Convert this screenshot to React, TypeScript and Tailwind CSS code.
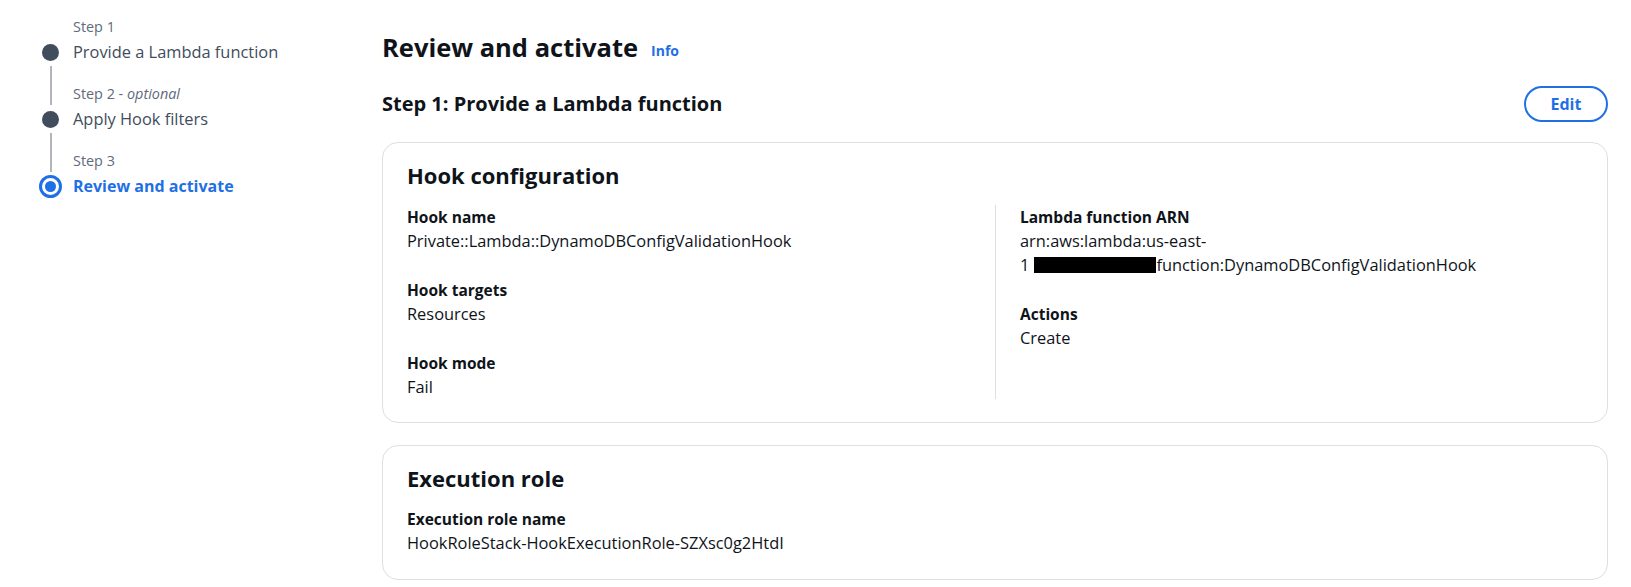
import { ReactNode } from 'react';

type Step = {
  label: string;
  optional?: boolean;
  title: string;
  active?: boolean;
};

const steps: Step[] = [
  { label: 'Step 1', title: 'Provide a Lambda function' },
  { label: 'Step 2', optional: true, title: 'Apply Hook filters' },
  { label: 'Step 3', title: 'Review and activate', active: true },
];

function Field({ label, children }: { label: string; children: ReactNode }) {
  return (
    <div>
      <div className="text-[15.5px] font-bold leading-[24px] text-[#0f141a]">{label}</div>
      <div className="text-[16.4px] leading-[24px] text-[#0f141a]">{children}</div>
    </div>
  );
}

function Sidebar() {
  return (
    <nav className="w-[382px] shrink-0 pl-[42px] pt-[17px]">
      {steps.map((s, i) => (
        <div key={s.label}>
          <div className={i === 0 ? 'flex' : 'flex h-[45px]'}>
            <div className="flex w-[17px] shrink-0 justify-center">
              {i > 0 && <div className="my-[3px] w-[2px] bg-[#b4b4bb]" />}
            </div>
            <div
              className={
                i === 0
                  ? 'pl-[14px] text-[14.4px] leading-[20px] text-[#5f6b7a]'
                  : 'self-end pb-[4px] pl-[14px] text-[14.4px] leading-[20px] text-[#5f6b7a]'
              }
            >
              {s.label}
              {s.optional && (
                <>
                  {' - '}
                  <i>optional</i>
                </>
              )}
            </div>
          </div>
          <div className={i === 0 ? 'mt-[4px] flex h-[22px] items-center' : 'flex h-[22px] items-center'}>
            <div className="flex w-[17px] shrink-0 justify-center">
              {s.active ? (
                <div className="flex h-[23px] w-[23px] shrink-0 items-center justify-center rounded-full border-[3px] border-[#1f6fe5]">
                  <div className="h-[11px] w-[11px] rounded-full bg-[#1f6fe5]" />
                </div>
              ) : (
                <div className="h-[17px] w-[17px] rounded-full bg-[#414d5c]" />
              )}
            </div>
            <div
              className={
                s.active
                  ? 'pl-[14px] text-[16px] font-bold leading-[22px] text-[#1f6fe5]'
                  : 'pl-[14px] text-[16.4px] leading-[22px] text-[#414d5c]'
              }
            >
              {s.title}
            </div>
          </div>
        </div>
      ))}
    </nav>
  );
}

export default function App() {
  return (
    <div className="flex h-[587px] w-[1631px] bg-white font-['Open_Sans',sans-serif] text-[#0f141a]">
      <Sidebar />
      <main className="w-[1226px] pt-[29px]">
        <div className="flex items-end gap-[13px]">
          <h1 className="text-[25.5px] font-bold leading-[36px]">Review and activate</h1>
          <a className="pb-[5px] text-[14px] font-bold leading-[18px] text-[#1f6fe5]">Info</a>
        </div>
        <div className="mt-[21px] flex h-[36px] items-center justify-between">
          <h2 className="text-[20px] font-bold leading-[28px]">Step 1: Provide a Lambda function</h2>
          <button
            type="button"
            className="h-[36px] w-[84px] rounded-full border-2 border-[#1f6fe5] text-[16px] font-bold text-[#1f6fe5]"
          >
            Edit
          </button>
        </div>

        <section className="mt-[20px] rounded-[16px] border border-[#dedee3] px-[24px] pb-[23px] pt-[16px]">
          <h3 className="text-[22px] font-bold leading-[32px]">Hook configuration</h3>
          <div className="mt-[14px] grid grid-cols-2">
            <div className="flex flex-col gap-[25px] pr-[24px]">
              <Field label="Hook name">Private::Lambda::DynamoDBConfigValidationHook</Field>
              <Field label="Hook targets">Resources</Field>
              <Field label="Hook mode">Fail</Field>
            </div>
            <div className="flex flex-col gap-[25px] border-l border-[#dedee3] pl-[24px]">
              <Field label="Lambda function ARN">
                arn:aws:lambda:us-east-
                <br />
                <span className="whitespace-nowrap">
                  1<span className="ml-[5px] inline-block h-[16px] w-[122px] translate-y-[2px] bg-black" />
                  function:DynamoDBConfigValidationHook
                </span>
              </Field>
              <Field label="Actions">Create</Field>
            </div>
          </div>
        </section>

        <section className="mt-[22px] rounded-[16px] border border-[#dedee3] px-[24px] pb-[24px] pt-[16px]">
          <h3 className="text-[22px] font-bold leading-[32px]">Execution role</h3>
          <div className="mt-[13px]">
            <Field label="Execution role name">HookRoleStack-HookExecutionRole-SZXsc0g2HtdI</Field>
          </div>
        </section>
      </main>
    </div>
  );
}
